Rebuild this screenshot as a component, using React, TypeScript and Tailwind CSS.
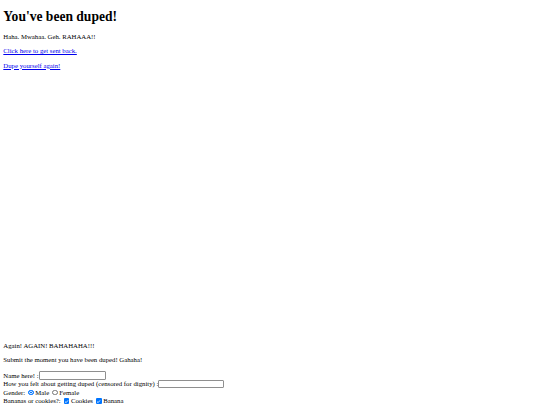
import React from "react";

const Radio = ({ checked }: { checked?: boolean }) => (
  <span
    className={
      "inline-block w-[5.5px] h-[5.5px] rounded-full box-border mx-[1.5px] " +
      (checked ? "border-[1.2px] border-[#0075ff] bg-[#0075ff] ring-[0.8px] ring-inset ring-white" : "border-[0.8px] border-[#767676] bg-white")
    }
  />
);

const Check = () => (
  <span className="inline-flex items-center justify-center w-[5.5px] h-[5.5px] rounded-[1px] bg-[#0075ff] mx-[1.5px]">
    <svg viewBox="0 0 10 10" width="5" height="5">
      <path d="M2 5.2 L4.2 7.3 L8 2.8" stroke="white" strokeWidth="1.6" fill="none" />
    </svg>
  </span>
);

const TextInput = ({ w }: { w: string }) => (
  <span className={"inline-block h-[8.5px] border-[0.8px] border-[#8f8f8f] rounded-[1px] bg-white box-border " + w} />
);

export default function App() {
  return (
    <div className="px-[3.33px] text-[6.76px] text-black bg-white min-h-[405px]" style={{ fontFamily: '"Liberation Serif", "Times New Roman", serif' }}>
      <div className="pt-[8.9px]">
        <h1 className="text-[13.55px] font-bold leading-[15.3px]">You've been duped!</h1>
        <p className="mt-[8.9px] leading-[7.66px]">Haha. Mwahaa. Geh. RAHAAA!!</p>
        <p className="mt-[6.67px] leading-[7.66px]">
          <a href="#" className="text-[#0000ee] underline">Click here to get sent back.</a>
        </p>
        <p className="mt-[6.67px] leading-[7.66px]">
          <a href="#" className="text-[#0000ee] underline">Dupe yourself again!</a>
        </p>
        <div className="h-[265.5px] mt-[6.67px]" />
        <p className="leading-[7.66px]">Again! AGAIN! BAHAHAHA!!!</p>
        <p className="mt-[6.67px] leading-[7.66px]">Submit the moment you have been duped! Gahaha!</p>
        <form className="mt-[8px]">
          <div className="flex items-center h-[8.5px] whitespace-pre">
            Name here! :<TextInput w="w-[67px]" />
          </div>
          <div className="flex items-center h-[8.5px] whitespace-pre">
            How you felt about getting duped (censored for dignity) :<TextInput w="w-[66px]" />
          </div>
          <div className="flex items-center h-[8.5px] whitespace-pre">
            Gender: <Radio checked />Male <Radio />Female
          </div>
          <div className="flex items-center h-[8.5px] whitespace-pre">
            Bananas or cookies?: <Check />Cookies <Check />Banana
          </div>
        </form>
      </div>
    </div>
  );
}
